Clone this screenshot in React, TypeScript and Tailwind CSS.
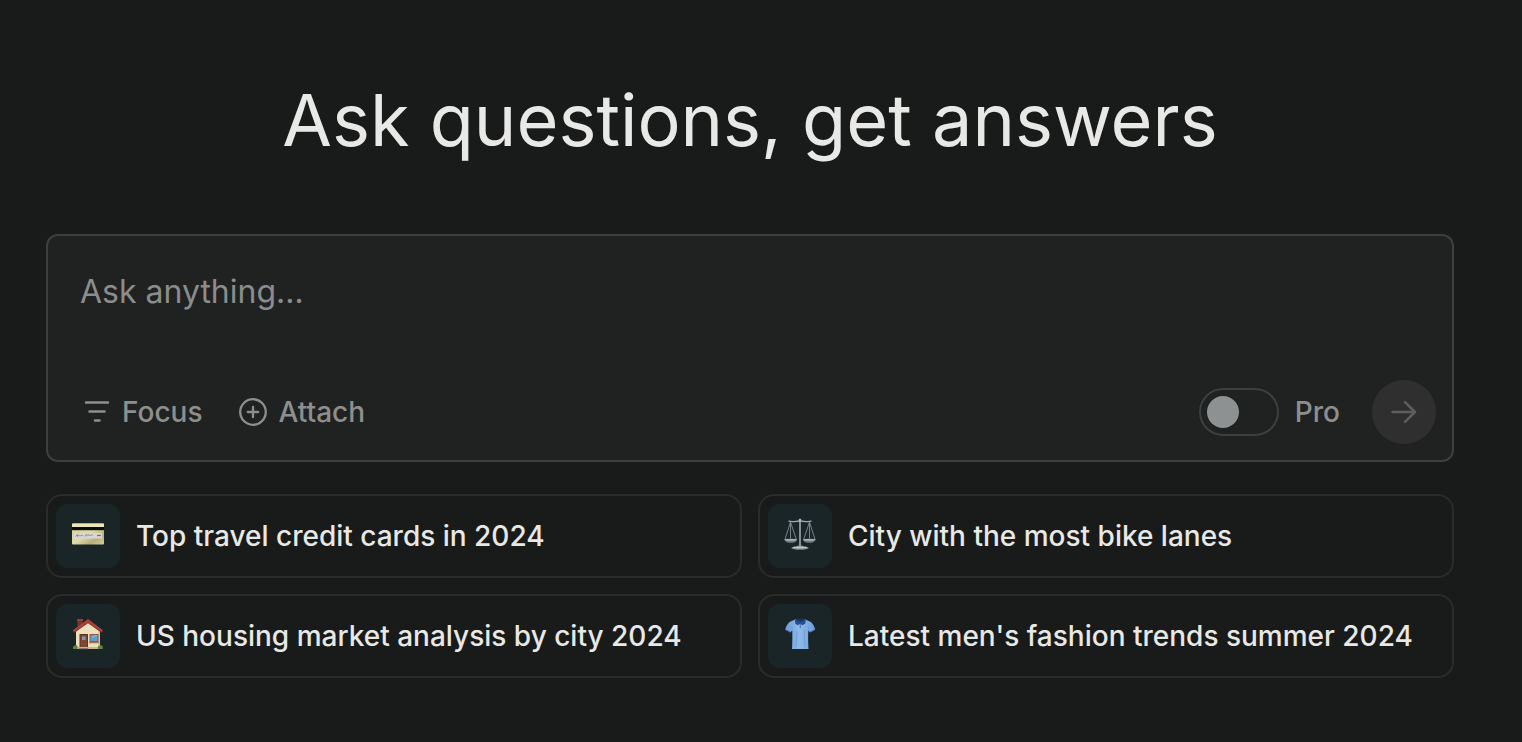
import React, { useState } from 'react'

interface Suggestion {
  id: string
  title: string
  icon: React.ReactElement
}

const CreditCardIcon: React.FC = () => (
  <svg width="36" height="36" viewBox="0 0 36 36" aria-hidden="true">
    <defs>
      <linearGradient id="cardFill" x1="0" y1="0" x2="1" y2="1">
        <stop offset="0" stopColor="#d9d19a" />
        <stop offset="0.5" stopColor="#e0d9ab" />
        <stop offset="0.75" stopColor="#b9b07a" />
        <stop offset="1" stopColor="#d6cf9b" />
      </linearGradient>
    </defs>
    <rect x="2" y="7.500" width="32" height="21" rx="1" fill="url(#cardFill)" />
    <rect x="2" y="7.500" width="32" height="3.500" rx="1" fill="#ece6b4" />
    <rect x="2" y="11" width="32" height="3.200" fill="#0b0b08" />
    <rect x="4" y="17" width="28" height="5.500" fill="#d8d8d2" />
    <path
      d="M5.500 20.500l2-2 0 2 2-1.500 1 1 2-1 1 1.200M15 20.500l1.500-2.500.8 2 1.700-1.500 1 1.500 2-1.500 1 1.300"
      fill="none"
      stroke="#7f8bab"
      strokeWidth="0.9"
    />
    <path d="M27 19.500h4" stroke="#77736a" strokeWidth="1.300" />
  </svg>
)

const HouseIcon: React.FC = () => (
  <svg width="36" height="36" viewBox="0 0 36 36" aria-hidden="true">
    <path d="M7.500 4h5v7l-5 4z" fill="#7b352d" />
    <path d="M7 3h6v2H7z" fill="#8f4037" />
    <path d="M6 15.500L18 5l12 10.500V32H6z" fill="#eedfbd" />
    <path d="M28 14l2 2v16h-2z" fill="#d9c598" />
    <path
      d="M18 3L2.800 14.200l1.200 2.300L18 6.800l13.800 9.700 1.200-2.300z"
      fill="#a8423a"
    />
    <path
      d="M4 16.500L18 6.800l13.800 9.700"
      fill="none"
      stroke="#6f2a26"
      strokeWidth="0.8"
    />
    <rect x="9.500" y="18" width="8.500" height="13.500" fill="#5f3427" />
    <rect x="10.500" y="19" width="6.500" height="12" fill="#7d4835" />
    <rect x="12" y="20.500" width="3.500" height="3.500" fill="#7f9aa8" />
    <rect x="19.500" y="18" width="9" height="8.500" fill="#8b5942" />
    <rect x="20.500" y="19" width="7" height="6" fill="#5b9fd3" />
    <path d="M21 23l4-4h2.500z" fill="#8dc0e4" />
    <path d="M19 26h10v1.300H19z" fill="#af7556" />
    <path d="M6 31h24v2H6z" fill="#c9b491" />
    <path d="M3 33c-.5-2 .5-3.500 2-3.500.8-1.200 2.500-.5 2.500 1.300V33z" fill="#60834a" />
    <path d="M28 33c-.5-2 .3-3.500 1.800-3.500 1.200-1 3 .2 3 1.500v2z" fill="#60834a" />
    <path d="M9 32h9v1.200H9z" fill="#8b7763" />
  </svg>
)

const ScalesIcon: React.FC = () => (
  <svg width="36" height="36" viewBox="0 0 36 36" aria-hidden="true">
    <g fill="none" stroke="#7e8d91" strokeLinecap="round">
      <path d="M7 5.200c4 1.200 7-.2 11-.2s7 1.400 11 .2" stroke="#a2adaf" strokeWidth="1.400" />
      <path d="M18 4v27" stroke="#a3adb0" strokeWidth="1.600" />
      <path d="M8.500 6L3 23.500M8.500 6v16M8.500 6l5.800 17.500" strokeWidth="0.9" />
      <path d="M27.500 6l-5.800 17.500M27.500 6v16M27.500 6L33 23.500" strokeWidth="0.9" />
    </g>
    <path d="M2.500 23.500h12.500c-.5 2.600-3 3.300-6.200 3.300s-5.800-.7-6.300-3.300z" fill="#6e7d81" />
    <path d="M21 23.500h12.500c-.5 2.600-3 3.300-6.200 3.300s-5.800-.7-6.300-3.300z" fill="#6e7d81" />
    <ellipse cx="8.700" cy="23.800" rx="6.200" ry="1" fill="#a6b1b3" />
    <ellipse cx="27.200" cy="23.800" rx="6.200" ry="1" fill="#a6b1b3" />
    <circle cx="18" cy="4" r="1.300" fill="#b5bebf" />
    <path d="M15.500 29.500h5l1 2h-7z" fill="#7c898c" />
    <ellipse cx="18" cy="32" rx="8.700" ry="1.700" fill="#7b8789" />
    <ellipse cx="18" cy="31.500" rx="7.500" ry="0.900" fill="#c0c7c8" />
  </svg>
)

const ShirtIcon: React.FC = () => (
  <svg width="36" height="36" viewBox="0 0 36 36" aria-hidden="true">
    <defs>
      <linearGradient id="shirtFill" x1="0" y1="0" x2="1" y2="0">
        <stop offset="0" stopColor="#6b9cda" />
        <stop offset="0.45" stopColor="#8fbaea" />
        <stop offset="1" stopColor="#6c9dda" />
      </linearGradient>
    </defs>
    <path
      d="M13 3.500L7.500 6C5.500 7.500 4 10.500 3.200 13.500l5.500 2.800 1.500-2c.3 6 .2 12-.2 18.700h16.500c-.4-6.700-.5-12.700-.2-18.700l1.500 2 5.400-2.800c-.8-3-2.300-6-4.300-7.500l-5.500-2.500z"
      fill="url(#shirtFill)"
    />
    <path
      d="M10.300 14.500l-.6-4M26.300 14.500l.6-4M15 15l-1 16M22 14l1 17"
      fill="none"
      stroke="#6a99d5"
      strokeWidth="0.8"
    />
    <path d="M3.200 13.500l5.500 2.800M33.200 13.500l-5.400 2.800" stroke="#4676b3" strokeWidth="0.9" />
    <path d="M12.800 4c2.500-1.800 8.500-1.800 11 0l-.5 3.500-2.800 1.800-2.200-1.500-2.700 1.500-2.300-1.800z" fill="#274f8e" />
    <ellipse cx="18.300" cy="4" rx="3.800" ry="1.400" fill="#173463" />
    <path d="M18.300 8v4" stroke="#4a77b5" strokeWidth="1.200" />
  </svg>
)

const FocusIcon: React.FC = () => (
  <svg width="26" height="26" viewBox="0 0 26 26" fill="none" aria-hidden="true">
    <path
      d="M2 3.500h22M5.500 12.500h15M11 21.500h4.500"
      stroke="currentColor"
      strokeWidth="2.500"
      strokeLinecap="round"
    />
  </svg>
)

const AttachIcon: React.FC = () => (
  <svg width="28" height="28" viewBox="0 0 28 28" fill="none" aria-hidden="true">
    <circle cx="14" cy="14" r="12.800" stroke="currentColor" strokeWidth="2.300" />
    <path
      d="M8.800 14h10.400M14 8.800v10.400"
      stroke="currentColor"
      strokeWidth="2.300"
      strokeLinecap="round"
    />
  </svg>
)

const ArrowIcon: React.FC = () => (
  <svg width="28" height="28" viewBox="0 0 28 28" fill="none" aria-hidden="true">
    <path
      d="M2.500 14h22.500M15 4.200L25 14 15 23.800"
      stroke="currentColor"
      strokeWidth="2.500"
      strokeLinecap="round"
      strokeLinejoin="round"
    />
  </svg>
)

const suggestions: Suggestion[] = [
  { id: 'cards', title: 'Top travel credit cards in 2024', icon: <CreditCardIcon /> },
  { id: 'bikes', title: 'City with the most bike lanes', icon: <ScalesIcon /> },
  { id: 'housing', title: 'US housing market analysis by city 2024', icon: <HouseIcon /> },
  { id: 'fashion', title: "Latest men's fashion trends summer 2024", icon: <ShirtIcon /> }
]

const App: React.FC = () => {
  const [query, setQuery] = useState<string>('')
  const [isPro, setIsPro] = useState<boolean>(false)

  return (
    <main className="min-h-screen bg-[#191b1a] pt-20 pr-[68px] pb-16 pl-[46px] font-['Inter','Liberation_Sans',sans-serif]">
      <h1 className="text-center text-[72px] leading-[80px] text-[#e8e8e6]">
        Ask questions, get answers
      </h1>

      <form
        className="mt-[74px] rounded-xl border-2 border-[#3d3f3e] bg-[#202221] p-4 pt-8"
        onSubmit={(e) => e.preventDefault()}
      >
        <textarea
          aria-label="Ask anything"
          placeholder="Ask anything…"
          rows={2}
          value={query}
          onChange={(e) => setQuery(e.target.value)}
          className="block h-24 w-full resize-none bg-transparent px-4 text-[32px] leading-[48px] text-[#e8e8e6] outline-none placeholder:text-[#8b8d8c]"
        />
        <div className="mt-4 flex items-center justify-between text-[28px] font-medium text-[#8d8f8e]">
          <div className="flex items-center gap-9 pl-5">
            <button type="button" className="flex items-center gap-3">
              <FocusIcon />
              Focus
            </button>
            <button type="button" className="flex items-center gap-3">
              <AttachIcon />
              Attach
            </button>
          </div>
          <div className="flex items-center gap-8">
            <label className="flex cursor-pointer items-center gap-4">
              <input
                type="checkbox"
                role="switch"
                checked={isPro}
                onChange={(e) => setIsPro(e.target.checked)}
                className="h-12 w-20 appearance-none rounded-full border-2 border-[#3d3f3e] p-1.5 before:block before:size-8 before:rounded-full before:bg-[#8d9191] checked:before:translate-x-8"
              />
              Pro
            </label>
            <button
              type="submit"
              aria-label="Submit"
              className="flex size-16 items-center justify-center rounded-full bg-[#2f2f2f] text-[#5d5f5e]"
            >
              <ArrowIcon />
            </button>
          </div>
        </div>
      </form>

      <div className="mt-8 grid grid-cols-2 gap-4">
        {suggestions.map((suggestion) => (
          <button
            key={suggestion.id}
            type="button"
            onClick={() => setQuery(suggestion.title)}
            className="flex items-center gap-4 rounded-2xl border-2 border-[#2a2c2b] p-2 text-left text-[28px] font-medium text-[#e8e8e6]"
          >
            <span className="flex size-16 shrink-0 items-center justify-center rounded-xl bg-[#1a2528] pb-1">
              {suggestion.icon}
            </span>
            {suggestion.title}
          </button>
        ))}
      </div>
    </main>
  )
}

export default App
